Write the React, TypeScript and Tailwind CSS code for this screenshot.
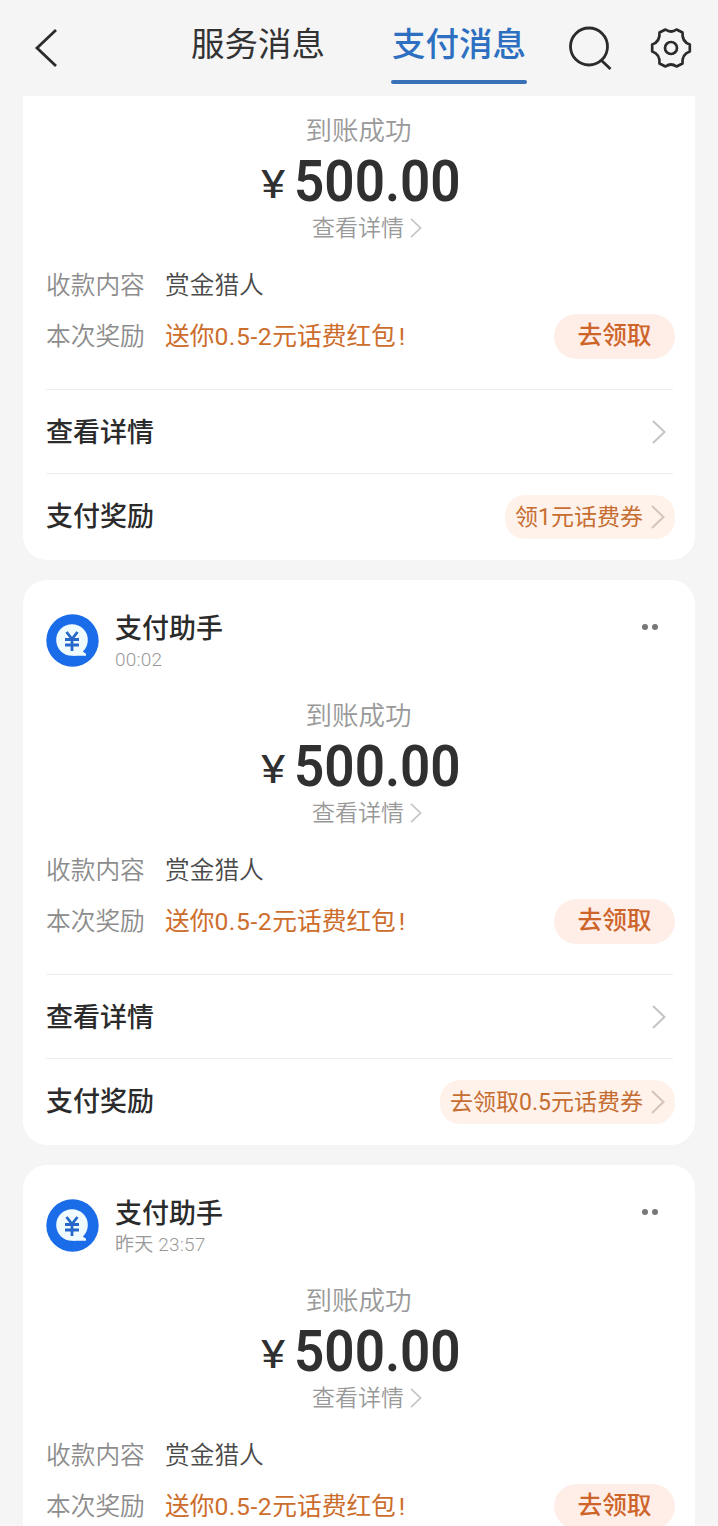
import React, { useState } from 'react';

const messages = [
  { id: 1, time: '', amount: '500.00', coupon: '领1元话费券' },
  { id: 2, time: '00:02', amount: '500.00', coupon: '去领取0.5元话费券' },
  { id: 3, time: '昨天 23:57', amount: '500.00', coupon: '领1元话费券' },
];

const Chevron = ({ className }: { className: string }) => (
  <svg viewBox="0 0 14 24" fill="none" stroke="currentColor" strokeWidth="2" className={className}>
    <path d="M1 1l11.5 11L1 23" />
  </svg>
);

const BackIcon = () => (
  <svg width="24" height="40" viewBox="0 0 24 40" fill="none" stroke="#2b2b2b" strokeWidth="2.8">
    <path d="M22 2L3 20l19 18" />
  </svg>
);

const SearchIcon = () => (
  <svg width="44" height="44" viewBox="0 0 44 44" fill="none" stroke="#2b2b2b" strokeWidth="2.8">
    <circle cx="21" cy="20.5" r="18.5" />
    <path d="M33 34l9.500 9" />
  </svg>
);

const SettingsIcon = () => (
  <svg width="42" height="42" viewBox="0 0 42 42" fill="none" stroke="#2b2b2b" strokeWidth="2.7" strokeLinejoin="round">
    <path d="M15.500 2.500Q21 6.500 26.500 2.500L32.500 5.500C32 12 34 15.500 39.800 17.500V24.500C34 26.500 32 30 32.500 36.500L26.500 39.500Q21 35.500 15.500 39.500L9.500 36.500C10 30 8 26.500 2.200 24.500V17.500C8 15.500 10 12 9.500 5.500Z" />
    <circle cx="21" cy="21" r="6" />
  </svg>
);

const Avatar = () => (
  <svg width="53" height="53" viewBox="0 0 53 53">
    <circle cx="26.500" cy="26.500" r="26.200" fill="#1b6ce8" />
    <circle cx="26" cy="26" r="15.800" fill="#f0fbff" />
    <path d="M26 41.800h14v-2l-4-2.800z" fill="#f0fbff" />
    <path d="M20.500 18l5.500 7 5.500-7M19 25.500h14M19 31h14M26 25v12" fill="none" stroke="#2667c9" strokeWidth="2.800" />
  </svg>
);

const MessageCard = ({ message }: { message: (typeof messages)[number] }) => (
  <section className={message.time ? 'w-[672px] rounded-[24px] bg-white pr-[22px] pl-[23px]' : 'w-[672px] rounded-b-[24px] bg-white pr-[22px] pl-[23px]'}>
    {message.time && (
      <div className="flex h-[101px] items-start">
        <div className="pt-[34px]"><Avatar /></div>
        <div className="ml-4 grow pt-[31px]">
          <h2 className="h-[35px] text-[27px] leading-9 font-medium text-[#2b2b2b]">支付助手</h2>
          <p className="h-7 text-[19px] leading-7 font-[350] tracking-[0.2px] text-[#999]">{message.time}</p>
        </div>
        <div className="mt-[44px] mr-[15px] flex gap-[4px]">
          <span className="size-[6px] rounded-full bg-[#777]" />
          <span className="size-[6px] rounded-full bg-[#777]" />
        </div>
      </div>
    )}

    <div className="flex flex-col items-center pt-[17px] pr-[2px]">
      <p className="h-[35px] text-[26.500px] leading-9 font-[350] text-[#999]">到账成功</p>
      <p className="flex h-[66px] items-center text-[#303030]">
        <span className="mt-[7px] w-[33px] origin-left scale-x-[1.22] text-[38px] leading-none font-normal">¥</span>
        <span className="w-[163px] origin-left scale-x-[0.915] text-[58px] leading-[66px] font-semibold">{message.amount}</span>
      </p>
      <p className="flex h-7 items-center pl-[17px] text-[23px] leading-8 font-[350] text-[#999]">
        <span className="pt-[2px]">查看详情</span>
        <Chevron className="ml-[6px] h-5 w-3 text-[#c4c4c4]" />
      </p>
    </div>

    <div className="mt-[18px] text-[24.700px] leading-8 font-[350]">
      <div className="flex h-[51px] items-center">
        <span className="w-[119px] text-[#8c8c8c]">收款内容</span>
        <span className="text-[#4a4a4a]">赏金猎人</span>
      </div>
      <div className="flex h-[51px] items-center">
        <span className="w-[119px] text-[#8c8c8c]">本次奖励</span>
        <span className="grow font-normal text-[#cd6d2c]">
          送你<span className="tracking-[0.6px]">0.5-2</span>元话费红包<span className="ml-[3px]">!</span>
        </span>
        <button className="-mr-[2px] h-[45px] w-[121px] rounded-full bg-[#ffeee8] pb-[2px] font-medium text-[#cd6429]">去领取</button>
      </div>
    </div>

    <div className="mt-[27px] flex h-[84px] items-center justify-between border-t border-[#ededed] text-[27px] font-medium text-[#2b2b2b]">
      <span className="pt-[3px]">查看详情</span>
      <Chevron className="mr-[7px] h-6 w-[14px] text-[#c4c4c4]" />
    </div>
    <div className="flex h-[87px] items-center justify-between border-t border-[#ededed] text-[27px] font-medium text-[#2b2b2b]">
      支付奖励
      <button className="-mr-[2px] flex h-11 items-center rounded-[20px] bg-[#fff2eb] pr-[10px] pl-[10px] text-[23px] font-normal text-[#c66e31]">
        <span className="pt-[2px]">{message.coupon}</span>
        <Chevron className="ml-[8px] h-6 w-[14px] text-[#d5c3ba]" />
      </button>
    </div>
  </section>
);

const App = () => {
  const [tab, setTab] = useState('pay');

  return (
    <div className="h-[1526px] w-[718px] overflow-hidden bg-[#f5f5f5] font-['Roboto','Noto_Sans_CJK_SC',sans-serif]">
      <header className="flex h-24 items-start">
        <button className="mt-7 ml-[34px]"><BackIcon /></button>
        <button onClick={() => setTab('service')} className="mt-4 ml-[132px] h-[68px] w-[136px] text-[33.500px] leading-[58px] text-[#333]">
          <span className="block h-full">服务消息</span>
        </button>
        <button onClick={() => setTab('pay')} className="mt-4 ml-[65px] h-[68px] w-[136px] text-[33.500px] leading-[58px] font-medium text-[#2d70c1]">
          <span className="block h-16">支付消息</span>
          {tab === 'pay' && <span className="block h-1 rounded-full bg-[#3a70b7]" />}
        </button>
        <button className="mt-[26px] ml-[41px]"><SearchIcon /></button>
        <button className="mt-[27px] ml-[38px]"><SettingsIcon /></button>
      </header>
      <main className="ml-[23px] flex flex-col gap-5">
        {messages.map((message) => (
          <MessageCard key={message.id} message={message} />
        ))}
      </main>
    </div>
  );
};

export default App;
